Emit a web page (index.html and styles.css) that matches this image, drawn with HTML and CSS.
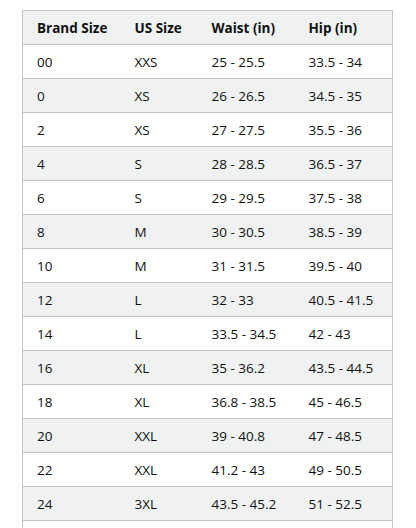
FILE: index.html
```
<!DOCTYPE html>
<html>
<head>
<meta charset="utf-8">
<link rel="stylesheet" href="styles.css">
</head>
<body>
<div class="wrap">
<table class="size-table">
<thead>
<tr><th class="c1">Brand Size</th><th class="c2">US Size</th><th class="c3">Waist (in)</th><th class="c4">Hip (in)</th></tr>
</thead>
<tbody>
<tr><td>00</td><td>XXS</td><td>25 - 25.5</td><td>33.5 - 34</td></tr>
<tr><td>0</td><td>XS</td><td>26 - 26.5</td><td>34.5 - 35</td></tr>
<tr><td>2</td><td>XS</td><td>27 - 27.5</td><td>35.5 - 36</td></tr>
<tr><td>4</td><td>S</td><td>28 - 28.5</td><td>36.5 - 37</td></tr>
<tr><td>6</td><td>S</td><td>29 - 29.5</td><td>37.5 - 38</td></tr>
<tr><td>8</td><td>M</td><td>30 - 30.5</td><td>38.5 - 39</td></tr>
<tr><td>10</td><td>M</td><td>31 - 31.5</td><td>39.5 - 40</td></tr>
<tr><td>12</td><td>L</td><td>32 - 33</td><td>40.5 - 41.5</td></tr>
<tr><td>14</td><td>L</td><td>33.5 - 34.5</td><td>42 - 43</td></tr>
<tr><td>16</td><td>XL</td><td>35 - 36.2</td><td>43.5 - 44.5</td></tr>
<tr><td>18</td><td>XL</td><td>36.8 - 38.5</td><td>45 - 46.5</td></tr>
<tr><td>20</td><td>XXL</td><td>39 - 40.8</td><td>47 - 48.5</td></tr>
<tr><td>22</td><td>XXL</td><td>41.2 - 43</td><td>49 - 50.5</td></tr>
<tr><td>24</td><td>3XL</td><td>43.5 - 45.2</td><td>51 - 52.5</td></tr>
<tr><td></td><td></td><td></td><td></td></tr>
</tbody>
</table>
</div>
</body>
</html>
```
FILE: styles.css
```
html, body {
  margin: 0;
  padding: 0;
  background: #fff;
}
body {
  font-family: "Open Sans", "Noto Sans", sans-serif;
  font-size: 13.5px;
  color: #0f1111;
  overflow: hidden;
  height: 528px;
}
.wrap {
  padding: 10px 0 0 22px;
}
.size-table {
  border-collapse: collapse;
  table-layout: fixed;
  width: 370px;
  border: 1px solid #c4c4c4;
}
.size-table th,
.size-table td {
  height: 34px;
  padding: 0 0 0 14px;
  text-align: left;
  border-bottom: 1px solid #c4c4c4;
  box-sizing: border-box;
  white-space: nowrap;
  line-height: 20px;
}
.size-table th {
  font-weight: 700;
}
.c1 { width: 98px; }
.c2 { width: 77px; }
.c3 { width: 97px; }
.c4 { width: 98px; }
.size-table thead tr,
.size-table tbody tr:nth-child(even) {
  background: #f0f2f2;
}
```
